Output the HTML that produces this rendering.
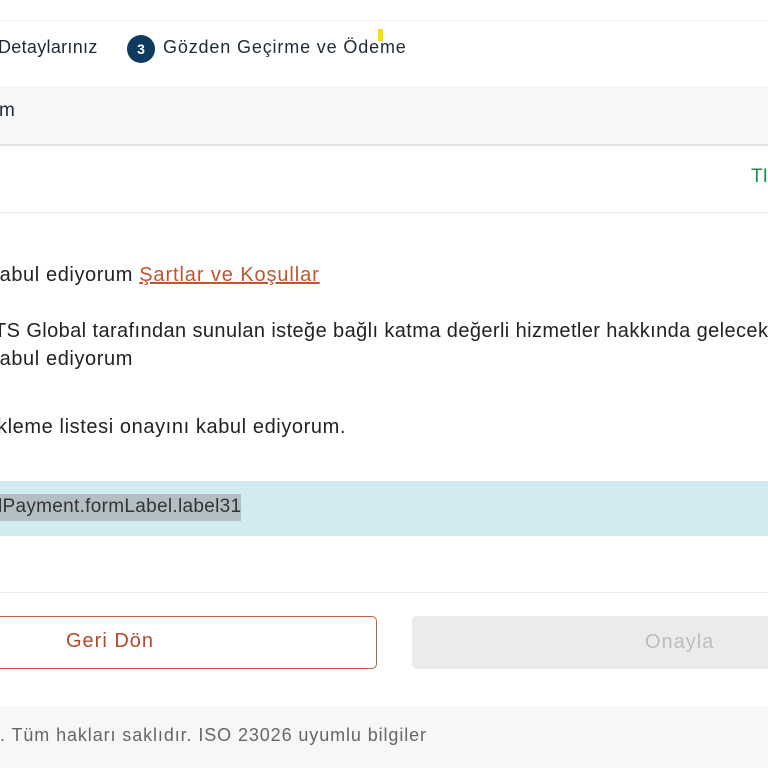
<!DOCTYPE html><html><head><meta charset="utf-8"><style>
body{margin:0;width:768px;height:768px;overflow:hidden;background:#fff;font-family:"Liberation Sans",sans-serif;position:relative}
.a{position:absolute;white-space:nowrap}
</style></head><body>
<div class="a" style="left:0;top:20px;width:768px;height:1px;background:#eef0f2"></div>
<div class="a" style="left:-2px;top:37px;font-size:18px;color:#1f2a36;letter-spacing:0.3px">Detaylarınız</div>
<div class="a" style="left:127px;top:35px;width:28px;height:28px;border-radius:50%;background:#0f3a5f;color:#fff;font-size:14px;font-weight:bold;text-align:center;line-height:28px">3</div>
<div class="a" style="left:163px;top:37px;font-size:18px;color:#1f2a36;letter-spacing:0.85px">Gözden Geçirme ve Ödeme</div>
<div class="a" style="left:378px;top:29px;width:5px;height:12px;background:#f5e000"></div>
<div class="a" style="left:0;top:86px;width:768px;height:58px;background:#f6f7f9;border-bottom:2px solid #e2e4e8"></div>
<div class="a" style="left:-1px;top:100px;font-size:19px;color:#1f2a36">m</div>
<div class="a" style="left:751px;top:166px;font-size:19px;color:#1e8a4a">TI</div>
<div class="a" style="left:0;top:212px;width:768px;height:1px;background:#e6e8eb"></div>
<div class="a" style="left:-11px;top:264px;font-size:20px;color:#222;letter-spacing:0.6px">kabul ediyorum <span style="color:#c0552e;text-decoration:underline;letter-spacing:0.9px">Şartlar ve Koşullar</span></div>
<div class="a" style="left:-6px;top:320px;font-size:20px;color:#222;letter-spacing:0.4px">TS Global tarafından sunulan isteğe bağlı katma değerli hizmetler hakkında gelecek</div>
<div class="a" style="left:-11px;top:348px;font-size:20px;color:#222;letter-spacing:0.6px">kabul ediyorum</div>
<div class="a" style="left:-8px;top:416px;font-size:20px;color:#222;letter-spacing:0.6px">ikleme listesi onayını kabul ediyorum.</div>
<div class="a" style="left:0;top:481px;width:768px;height:55px;background:#d1ebf0"></div>
<div class="a" style="left:0;top:494px;width:241px;height:27px;background:#b4bfc3"></div>
<div class="a" style="left:-2px;top:496px;font-size:19px;color:#333;letter-spacing:0.3px">lPayment.formLabel.label31</div>
<div class="a" style="left:0;top:592px;width:768px;height:1px;background:#eceef0"></div>
<div class="a" style="left:-10px;top:616px;width:387px;height:53px;border:1px solid #c0603f;border-radius:5px;box-sizing:border-box"></div>
<div class="a" style="left:66px;top:630px;font-size:20px;color:#b24a2a;letter-spacing:1px">Geri Dön</div>
<div class="a" style="left:412px;top:616px;width:370px;height:53px;background:#ebebeb;border-radius:5px"></div>
<div class="a" style="left:645px;top:631px;font-size:20px;color:#bdbdbd;letter-spacing:1px">Onayla</div>
<div class="a" style="left:0;top:706px;width:768px;height:62px;background:#f6f7f9"></div>
<div class="a" style="left:0;top:725px;font-size:18px;color:#666;letter-spacing:0.9px">. Tüm hakları saklıdır. ISO 23026 uyumlu bilgiler</div>
</body></html>
